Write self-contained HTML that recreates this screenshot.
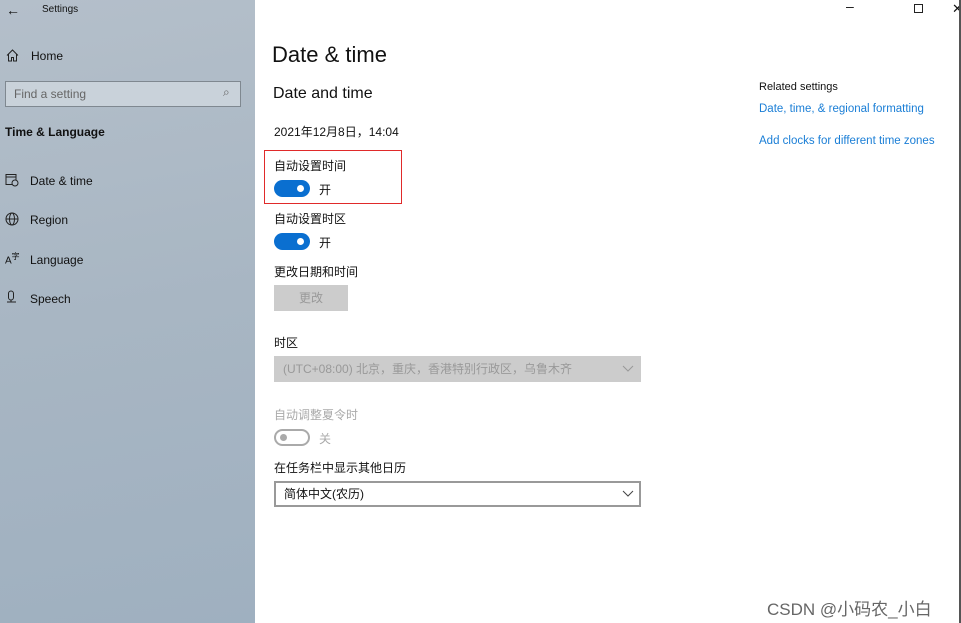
<!DOCTYPE html>
<html><head><meta charset="utf-8"><style>
*{margin:0;padding:0;box-sizing:border-box}
body{width:961px;height:623px;overflow:hidden;position:relative;background:#fff;font-family:"Liberation Sans","Noto Sans CJK SC",sans-serif;color:#111}
.side{position:absolute;left:0;top:0;width:255px;height:623px;background:linear-gradient(170deg,#b4bfca 0%,#a8b6c3 50%,#9fb0c0 100%)}
.t{position:absolute;white-space:nowrap}
.s{font-size:12px;color:#111}
.cn{font-size:12px}
.tog{position:absolute;width:36px;height:17px;border-radius:9px;background:#0a6fd0}
.tog::after{content:"";position:absolute;right:6px;top:5px;width:7px;height:7px;border-radius:50%;background:#fff}
.off{position:absolute;width:36px;height:17px;border-radius:9px;border:2px solid #aaa;background:#fff}
.off::after{content:"";position:absolute;left:4px;top:3px;width:7px;height:7px;border-radius:50%;background:#aaa}
a{color:#1a7ed6;text-decoration:none}
</style></head><body>
<div class="side">
<div class="t" style="left:6px;top:2px;font-size:14px">←</div>
<div class="t" style="left:42px;top:4px;font-size:10px">Settings</div>
<svg class="t" style="left:6px;top:49px" width="13" height="13" viewBox="0 0 13 13" fill="none" stroke="#222" stroke-width="1"><path d="M1 6.5L6.5 1 12 6.5M2.5 5v7h3V8.5h2V12h3V5"/></svg>
<div class="t s" style="left:31px;top:49px">Home</div>
<div class="t" style="left:5px;top:81px;width:236px;height:26px;border:1.5px solid #7f8890;background:#c9d2da"></div>
<div class="t" style="left:14px;top:87px;font-size:12px;color:#666">Find a setting</div>
<div class="t" style="left:223px;top:85px;font-size:12px;color:#666">⌕</div>
<div class="t" style="left:5px;top:125px;font-size:12px;font-weight:bold">Time &amp; Language</div>
<svg class="t" style="left:5px;top:173px" width="14" height="14" viewBox="0 0 14 14" fill="none" stroke="#222"><rect x="1" y="1.5" width="10" height="10"/><path d="M1 4h10"/><circle cx="10" cy="10" r="3" fill="#b0bcc8"/></svg>
<div class="t s" style="left:30px;top:174px">Date &amp; time</div>
<svg class="t" style="left:5px;top:212px" width="14" height="14" viewBox="0 0 14 14" fill="none" stroke="#222"><circle cx="7" cy="7" r="6"/><ellipse cx="7" cy="7" rx="2.5" ry="6"/><path d="M1 7h12"/></svg>
<div class="t s" style="left:30px;top:213px">Region</div>
<div class="t" style="left:5px;top:251px;font-size:10px">A<sup style="font-size:8px">字</sup></div>
<div class="t s" style="left:30px;top:253px">Language</div>
<svg class="t" style="left:6px;top:290px" width="11" height="15" viewBox="0 0 11 15" fill="none" stroke="#222"><rect x="2.5" y="1" width="5" height="9" rx="2.5"/><path d="M1 12h9M5 10v2"/></svg>
<div class="t s" style="left:30px;top:292px">Speech</div>
</div>
<div class="t" style="left:846px;top:-2px;font-size:14px">–</div>
<div class="t" style="left:914px;top:4px;width:9px;height:9px;border:1px solid #222"></div>
<div class="t" style="left:952px;top:1px;font-size:13px">✕</div>
<div class="t" style="left:959px;top:0;width:2px;height:623px;background:#555"></div>
<div class="t" style="left:272px;top:42px;font-size:22px;color:#111">Date &amp; time</div>
<div class="t" style="left:273px;top:85px;font-size:16px">Date and time</div>
<div class="t s" style="left:274px;top:123px">2021年12月8日，14:04</div>
<div class="t" style="left:264px;top:150px;width:138px;height:54px;border:1.5px solid #e02a2a"></div>
<div class="t cn" style="left:274px;top:157px">自动设置时间</div>
<div class="tog" style="left:274px;top:180px"></div>
<div class="t cn" style="left:319px;top:181px">开</div>
<div class="t cn" style="left:274px;top:210px">自动设置时区</div>
<div class="tog" style="left:274px;top:233px"></div>
<div class="t cn" style="left:319px;top:234px">开</div>
<div class="t cn" style="left:274px;top:263px">更改日期和时间</div>
<div class="t" style="left:274px;top:285px;width:74px;height:26px;background:#ccc;color:#999;font-size:12px;text-align:center;line-height:26px">更改</div>
<div class="t cn" style="left:274px;top:334px">时区</div>
<div class="t" style="left:274px;top:356px;width:367px;height:26px;background:#ccc;color:#999;font-size:12px;line-height:26px;padding-left:9px">(UTC+08:00) 北京，重庆，香港特别行政区，乌鲁木齐</div>
<svg class="t" style="left:622px;top:365px" width="12" height="7" fill="none" stroke="#999"><path d="M1 1l5 5 5-5"/></svg>
<div class="t cn" style="left:274px;top:406px;color:#aaa">自动调整夏令时</div>
<div class="off" style="left:274px;top:429px"></div>
<div class="t cn" style="left:319px;top:430px;color:#aaa">关</div>
<div class="t cn" style="left:274px;top:459px">在任务栏中显示其他日历</div>
<div class="t" style="left:274px;top:481px;width:367px;height:26px;border:2px solid #999;font-size:12px;line-height:22px;padding-left:8px">简体中文(农历)</div>
<svg class="t" style="left:622px;top:490px" width="12" height="7" fill="none" stroke="#444"><path d="M1 1l5 5 5-5"/></svg>
<div class="t" style="left:759px;top:81px;font-size:11px">Related settings</div>
<div class="t" style="left:759px;top:103px;font-size:11.5px"><a>Date, time, &amp; regional formatting</a></div>
<div class="t" style="left:759px;top:135px;font-size:11.5px"><a>Add clocks for different time zones</a></div>
<div class="t" style="left:767px;top:595px;font-size:17px;color:#666">CSDN @小码农_小白</div>
</body></html>
